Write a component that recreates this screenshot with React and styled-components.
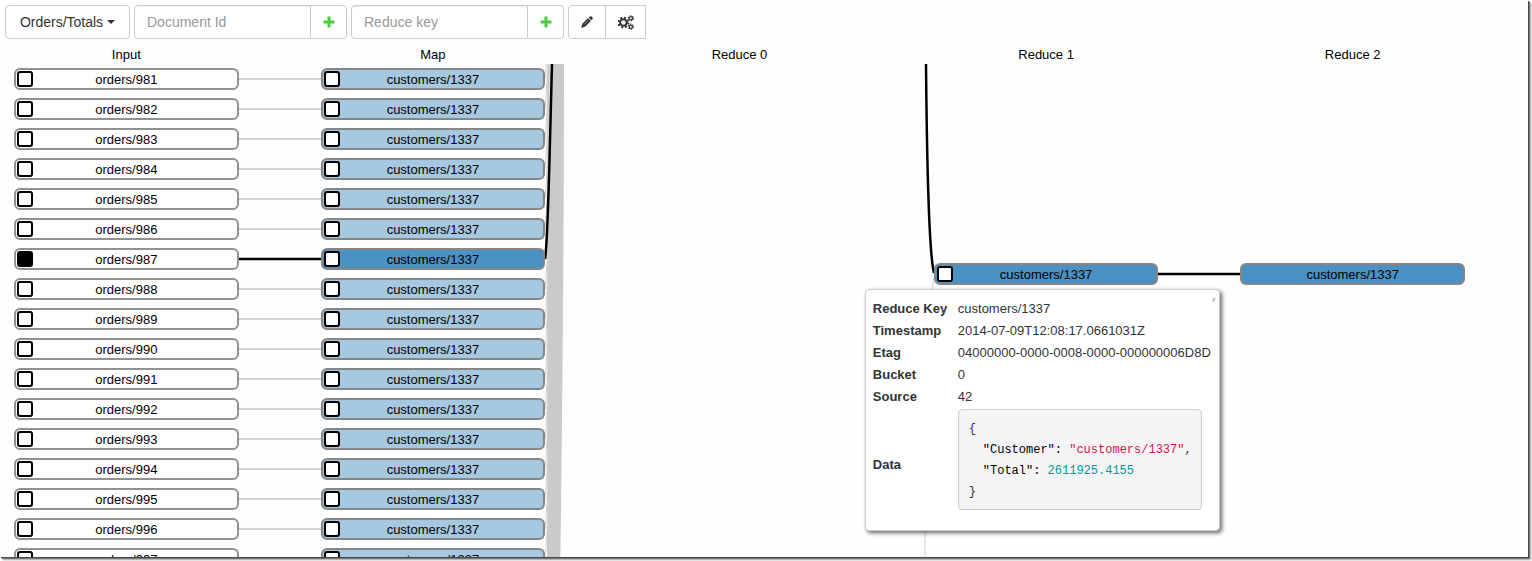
import React, { useState } from 'react';
import styled, { createGlobalStyle } from 'styled-components';

const GlobalStyle = createGlobalStyle`
  * {
    box-sizing: border-box;
  }
  body {
    height: 100vh;
    margin: 0;
    overflow: hidden;
    background: #fff;
    color: #333;
    font-family: 'Liberation Sans', Arial, sans-serif;
    font-size: 13px;
  }
  #root {
    height: 100%;
    padding: 0 4px 4px 0;
  }
`;

const Page = styled.main`
  display: flex;
  flex-direction: column;
  height: 100%;
  background: #fefefe;
  box-shadow: 1px 1px 0 #484848, 2px 2px 1px #777, 3px 3px 2px #aaa;
`;

const Toolbar = styled.div`
  display: flex;
  gap: 4px;
  padding: 5px 5px 0;
`;

const Button = styled.button`
  display: flex;
  align-items: center;
  justify-content: center;
  width: ${({ $width }) => $width}px;
  height: 34px;
  padding: 0;
  border: 1px solid #ccc;
  border-radius: ${({ $radius }) => $radius || '4px'};
  background: #fff;
  color: ${({ $color }) => $color || '#333'};
  font-family: inherit;
  font-size: 14px;
  & + & {
    margin-left: -1px;
  }
`;

const Caret = styled.span`
  margin-left: 4px;
  border-top: 4px solid #333;
  border-right: 4px solid transparent;
  border-left: 4px solid transparent;
`;

const Group = styled.div`
  display: flex;
`;

const TextBox = styled.input`
  width: 177px;
  height: 34px;
  margin-right: -1px;
  padding: 6px 12px;
  border: 1px solid #ccc;
  border-radius: 4px 0 0 4px;
  background: #fff;
  box-shadow: inset 0 1px 1px rgba(0, 0, 0, 0.075);
  color: #555;
  font-family: inherit;
  font-size: 14px;
  &::placeholder {
    color: #999;
    opacity: 1;
  }
`;

const Columns = styled.div`
  display: grid;
  grid-template-columns: repeat(5, 1fr);
  column-gap: 82px;
  padding: 0 63px 0 14px;
`;

const Headings = styled(Columns)`
  padding-top: 8px;
  padding-bottom: 1px;
  color: #000;
  line-height: 16px;
  text-align: center;
`;

const Canvas = styled.div`
  position: relative;
  flex: 1;
  min-height: 0;
  overflow: hidden;
`;

const Links = styled.svg`
  position: absolute;
  top: 0;
  left: 0;
  width: 100%;
  height: 520px;
  path {
    fill: none;
    stroke: #d3d3d3;
    stroke-width: 2px;
    vector-effect: non-scaling-stroke;
  }
  .thin {
    stroke-width: 1px;
  }
  .band {
    fill: #cacaca;
    stroke: none;
  }
  .streak {
    stroke: #e2e2e2;
    stroke-width: 1px;
  }
  .selected {
    stroke: #000;
    stroke-width: 2.5px;
  }
`;

const Column = styled.div`
  position: relative;
  display: flex;
  flex-direction: column;
  gap: 8px;
  padding-top: ${({ $top }) => $top || 4}px;
`;

const nodeColors = {
  plain: '#fff',
  light: '#a6c8e0',
  dark: '#4b91c3',
};

const NodeBox = styled.label`
  display: grid;
  grid-template-columns: 16px 1fr 16px;
  align-items: center;
  height: 22px;
  padding: 0 1px;
  border: 2px solid ${({ $tone }) => ($tone === 'plain' ? '#919191' : '#868686')};
  border-radius: 6px;
  background: ${({ $tone }) => nodeColors[$tone]};
  color: #000;
  line-height: 16px;
  text-align: center;
`;

const NodeText = styled.span`
  grid-column: 2;
  padding-top: 2px;
`;

const Check = styled.input`
  appearance: none;
  width: 16px;
  height: 16px;
  margin: 0;
  border: 2px solid #000;
  border-radius: 3px;
  background: #fff;
  &:checked {
    background: #000;
  }
`;

const Popup = styled.section`
  position: absolute;
  top: 225px;
  left: -69px;
  width: 355px;
  height: 242px;
  padding: 8px 7px;
  border: 1px solid #ccc;
  border-radius: 4px;
  background: #fff;
  box-shadow: 2px 2px 4px rgba(0, 0, 0, 0.6);
`;

const Grip = styled.svg`
  position: absolute;
  top: 7px;
  right: 3px;
  width: 4px;
  height: 5px;
`;

const Details = styled.table`
  border-collapse: collapse;
  line-height: 22px;
  th {
    width: 85px;
    padding: 0;
    text-align: left;
    white-space: nowrap;
  }
  td {
    padding: 0;
    white-space: nowrap;
  }
`;

const Code = styled.pre`
  width: 244px;
  margin: 1px 0 11px;
  padding: 9px 10px 6px;
  border: 1px solid #ccc;
  border-radius: 4px;
  background: #f5f5f5;
  color: #333;
  font-family: 'Liberation Mono', Consolas, monospace;
  font-size: 12px;
  line-height: 21px;
`;

const CodeLine = styled.div`
  padding-left: ${({ $nested }) => ($nested ? 14 : 0)}px;
`;

const Token = styled.span`
  color: ${({ $color }) => $color};
`;

const orders = Array.from({ length: 17 }, (_, i) => 981 + i);
const selectedOrder = 987;
const selectedIndex = orders.indexOf(selectedOrder);

const details = [
  ['Reduce Key', 'customers/1337'],
  ['Timestamp', '2014-07-09T12:08:17.0661031Z'],
  ['Etag', '04000000-0000-0008-0000-000000006D8D'],
  ['Bucket', '0'],
  ['Source', '42'],
];

function PlusIcon() {
  return (
    <svg width="12" height="12" viewBox="0 0 12 12" fill="currentColor" aria-hidden="true">
      <path d="M4.7 0.5H7.3Q7.5 0.5 7.5 1V4.5H11Q11.5 4.5 11.5 4.8V7.2Q11.5 7.5 11 7.5H7.5V11Q7.5 11.5 7.2 11.5H4.8Q4.5 11.5 4.5 11V7.5H1Q0.5 7.5 0.5 7.2V4.8Q0.5 4.5 1 4.5H4.5V1Q4.5 0.5 4.7 0.5Z" />
    </svg>
  );
}

function PencilIcon() {
  return (
    <svg width="12" height="12" viewBox="0 0 12 12" fill="currentColor" aria-hidden="true">
      <path d="M7.7 1.6L9 0.4Q9.7 -0.1 10.4 0.5L11.5 1.6Q12.1 2.3 11.6 3L10.4 4.3Z" />
      <path d="M7.1 2.1L9.9 4.9L4.4 10.4L0 12L1.6 7.6Z" />
      <path d="M3.4 8.4L7.4 4.4" stroke="#fff" strokeWidth="0.5" />
    </svg>
  );
}

function Gear({ x, y, r, width, teeth }) {
  // one dash and one gap of equal length for each tooth
  const outer = r + width * 0.8;
  const dash = (Math.PI * outer) / teeth;
  return (
    <g fill="none" stroke="currentColor">
      <circle cx={x} cy={y} r={r} strokeWidth={width} />
      <circle cx={x} cy={y} r={outer} strokeWidth={width} strokeDasharray={dash} />
    </g>
  );
}

function GearsIcon() {
  return (
    <svg width="16" height="15" viewBox="0 0 16 15" aria-hidden="true">
      <Gear x={5.4} y={7.5} r={3.3} width={2} teeth={8} />
      <Gear x={12.9} y={3.3} r={1.6} width={1.2} teeth={6} />
      <Gear x={12.9} y={11.7} r={1.6} width={1.2} teeth={6} />
    </svg>
  );
}

function Node({ text, tone = 'plain', checkable = true, initial = false }) {
  const [checked, setChecked] = useState(initial);
  return (
    <NodeBox $tone={tone} as={checkable ? 'label' : 'div'}>
      {checkable && (
        <Check type="checkbox" checked={checked} onChange={() => setChecked(!checked)} />
      )}
      <NodeText>{text}</NodeText>
    </NodeBox>
  );
}

function AddField({ placeholder }) {
  return (
    <Group>
      <TextBox type="text" placeholder={placeholder} aria-label={placeholder} />
      <Button $width={37} $radius="0 4px 4px 0" $color="#4fcb41" aria-label={`Add ${placeholder}`}>
        <PlusIcon />
      </Button>
    </Group>
  );
}

function GraphLinks() {
  const rowY = (i) => 15 + i * 30;
  return (
    <Links viewBox="0 0 1528 520" preserveAspectRatio="none" aria-hidden="true">
      <path className="band" d="M547 0H564C564 180 562 380 560 520H547Z" />
      {orders.map((order, i) => (
        <path
          key={order}
          className="thin"
          d={`M545 ${rowY(i)}Q547 ${rowY(i) - 20} 548 ${rowY(i) - 60}`}
        />
      ))}
      <path className="streak" d="M550 0Q549 90 547 150" />
      {orders.map((order, i) => (
        <path
          key={order}
          className={i === selectedIndex ? 'selected' : undefined}
          d={`M238 ${rowY(i)}H322`}
        />
      ))}
      <path className="selected" d="M545 195C548 180 549 110 552 0" />
      <path className="thin" d="M934 212C930 240 925 330 925 520" />
      <path className="selected" d="M926 0C927 110 929 190 934 209" />
      <path className="selected" d="M1157 210H1241" />
    </Links>
  );
}

function NodeDetails() {
  return (
    <Popup>
      <Grip viewBox="0 0 4 5">
        <path d="M0 5L1 1H4L2 5Z" fill="#c8c8c8" />
      </Grip>
      <Details>
        <tbody>
          {details.map(([name, value]) => (
            <tr key={name}>
              <th scope="row">{name}</th>
              <td>{value}</td>
            </tr>
          ))}
          <tr>
            <th scope="row">Data</th>
            <td>
              <Code>
                <CodeLine>{'{'}</CodeLine>
                <CodeLine $nested>
                  <Token $color="#000">"Customer": </Token>
                  <Token $color="#d14">"customers/1337"</Token>,
                </CodeLine>
                <CodeLine $nested>
                  <Token $color="#000">"Total": </Token>
                  <Token $color="#099">2611925.4155</Token>
                </CodeLine>
                <CodeLine>{'}'}</CodeLine>
              </Code>
            </td>
          </tr>
        </tbody>
      </Details>
    </Popup>
  );
}

export default function App() {
  return (
    <>
      <GlobalStyle />
      <Page>
        <Toolbar>
          <Button $width={125}>
            Orders/Totals
            <Caret />
          </Button>
          <AddField placeholder="Document Id" />
          <AddField placeholder="Reduce key" />
          <Group>
            <Button $width={38} $radius="4px 0 0 4px" aria-label="Edit">
              <PencilIcon />
            </Button>
            <Button $width={41} $radius="0" aria-label="Settings">
              <GearsIcon />
            </Button>
          </Group>
        </Toolbar>
        <Headings>
          <span>Input</span>
          <span>Map</span>
          <span>Reduce 0</span>
          <span>Reduce 1</span>
          <span>Reduce 2</span>
        </Headings>
        <Canvas>
          <GraphLinks />
          <Columns>
            <Column>
              {orders.map((order) => (
                <Node key={order} text={`orders/${order}`} initial={order === selectedOrder} />
              ))}
            </Column>
            <Column>
              {orders.map((order) => (
                <Node
                  key={order}
                  text="customers/1337"
                  tone={order === selectedOrder ? 'dark' : 'light'}
                />
              ))}
            </Column>
            <Column />
            <Column $top={199}>
              <Node text="customers/1337" tone="dark" />
              <NodeDetails />
            </Column>
            <Column $top={199}>
              <Node text="customers/1337" tone="dark" checkable={false} />
            </Column>
          </Columns>
        </Canvas>
      </Page>
    </>
  );
}
